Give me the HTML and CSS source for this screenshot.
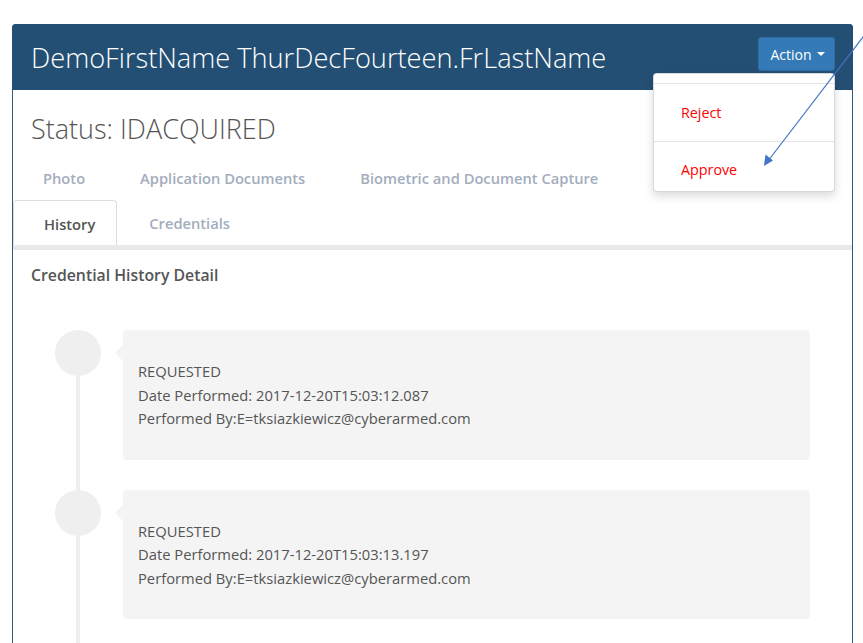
FILE: index.html
```html
<!DOCTYPE html>
<html>
<head>
<meta charset="utf-8">
<link rel="stylesheet" href="styles.css">
</head>
<body>
<div class="page">
  <div class="panel">
    <div class="panel-heading">
      <h1 class="title">DemoFirstName ThurDecFourteen.FrLastName</h1>
      <div class="action">
        <button class="btn-action">Action <span class="caret"></span></button>
        <ul class="dropdown">
          <li class="divider"></li>
          <li class="item item-first">Reject</li>
          <li class="divider"></li>
          <li class="item item-last">Approve</li>
        </ul>
      </div>
    </div>
    <div class="panel-body">
      <h2 class="status">Status: IDACQUIRED</h2>
    </div>
    <ul class="tabs">
      <li class="tab">Photo</li>
      <li class="tab">Application Documents</li>
      <li class="tab">Biometric and Document Capture</li>
      <li class="tab-break"></li>
      <li class="tab active">History</li>
      <li class="tab">Credentials</li>
    </ul>
    <div class="content">
      <h3 class="section-title">Credential History Detail</h3>
      <div class="timeline">
        <div class="tl-item">
          <div class="tl-dot"></div>
          <div class="tl-card">
            <div>REQUESTED</div>
            <div>Date Performed: 2017-12-20T15:03:12.087</div>
            <div>Performed By:E=tksiazkiewicz@cyberarmed.com</div>
          </div>
        </div>
        <div class="tl-item">
          <div class="tl-dot"></div>
          <div class="tl-card">
            <div>REQUESTED</div>
            <div>Date Performed: 2017-12-20T15:03:13.197</div>
            <div>Performed By:E=tksiazkiewicz@cyberarmed.com</div>
          </div>
        </div>
      </div>
    </div>
  </div>
</div>
<svg class="annotation" width="863" height="643" viewBox="0 0 863 643">
  <line x1="876" y1="20" x2="768" y2="161" stroke="#4472c4" stroke-width="1.2"/>
  <polygon points="764,166 765.5,154.5 773,160.5" fill="#4472c4"/>
</svg>
</body>
</html>
```
FILE: styles.css
```css
* { box-sizing: border-box; }
html, body { margin: 0; padding: 0; background: #fff; }
body {
  font-family: "Open Sans", "Liberation Sans", sans-serif;
  font-size: 14px;
  color: #555;
  overflow: hidden;
  width: 863px;
  height: 643px;
  position: relative;
}
.page {
  padding: 24px 10px 0 12px;
}
.panel {
  border: 1px solid #2c5a84;
  border-bottom: none;
  border-radius: 4px 4px 0 0;
  height: 640px;
}
.panel-heading {
  background: #244f74;
  height: 66px;
  margin: -1px -1px 0 -1px;
  border-radius: 4px 4px 0 0;
  padding: 0 18px 0 19px;
  display: flex;
  align-items: center;
  justify-content: space-between;
  position: relative;
}
.title {
  margin: 0;
  font-weight: 300;
  font-size: 27.2px;
  color: #fff;
  line-height: 36px;
  padding-top: 2px;
}
.action {
  position: relative;
  align-self: flex-start;
  margin-top: 13px;
}
.btn-action {
  background: #337ab7;
  border: 1px solid #2e6da4;
  border-radius: 3px;
  color: #fff;
  font-family: "Open Sans", "Liberation Sans", sans-serif;
  font-size: 14px;
  height: 34px;
  width: 77px;
  padding: 0 0 0 2px;
  display: flex;
  align-items: center;
  justify-content: center;
  gap: 5px;
}
.caret {
  display: inline-block;
  width: 0;
  height: 0;
  border-left: 4px solid transparent;
  border-right: 4px solid transparent;
  border-top: 4px solid #fff;
}
.dropdown {
  position: absolute;
  top: 36px;
  right: 0;
  width: 182px;
  height: 119px;
  margin: 0;
  padding: 0;
  list-style: none;
  background: #fff;
  border: 1px solid rgba(0,0,0,.15);
  border-radius: 4px;
  box-shadow: 0 4px 10px rgba(0,0,0,.15);
  z-index: 5;
}
.divider {
  height: 1px;
  background: #e5e5e5;
}
.dropdown .divider:first-child {
  margin-top: 9px;
}
.item {
  color: #ff0000;
  line-height: 20px;
  padding: 19px 0 0 27px;
  font-size: 14.3px;
}
.item-first { height: 57px; }
.item-last { height: 49px; padding-top: 18px; }
.panel-body {
  padding: 21px 18px 0 18px;
}
.status {
  margin: 0;
  font-weight: 300;
  font-size: 27px;
  line-height: 36px;
  color: #555;
}
.tabs {
  list-style: none;
  margin: 8px 0 0 0;
  padding: 0;
  display: flex;
  flex-wrap: wrap;
  border-bottom: 5px solid #e8e9eb;
}
.tab-break {
  flex-basis: 100%;
  height: 0;
}
.tab {
  font-weight: 600;
  font-size: 14.7px;
  color: #a3adbd;
  line-height: 20px;
  padding: 13px 23px 12px 30px;
  height: 45px;
  margin-right: 2px;
}
.tab.active {
  color: #555;
  border: 1px solid #ddd;
  border-bottom: none;
  border-radius: 4px 4px 0 0;
  padding: 13px 21px 11px 30px;
}
.content {
  padding: 13px 18px 0 18px;
}
.section-title {
  margin: 0;
  font-weight: 600;
  font-size: 15.8px;
  line-height: 24px;
  color: #555;
}
.timeline {
  position: relative;
  margin: 43px 24px 0 24px;
}
.timeline::before {
  content: "";
  position: absolute;
  left: 21px;
  top: 23px;
  width: 4px;
  height: 400px;
  background: #efefef;
}
.tl-item {
  display: flex;
  align-items: flex-start;
  margin-bottom: 30px;
  position: relative;
}
.tl-dot {
  width: 46px;
  height: 46px;
  border-radius: 50%;
  background: #efefef;
  flex: none;
  position: relative;
  z-index: 1;
}
.tl-card {
  flex: 1;
  margin-left: 22px;
  background: #f4f4f4;
  border-radius: 4px;
  padding: 30px 15px 29px 15px;
  line-height: 23.5px;
  font-size: 14.75px;
  color: #555;
  position: relative;
}
.tl-card::before {
  content: "";
  position: absolute;
  left: -8px;
  top: 15px;
  border-top: 8px solid transparent;
  border-bottom: 8px solid transparent;
  border-right: 8px solid #f4f4f4;
}
.annotation {
  position: absolute;
  left: 0;
  top: 0;
  pointer-events: none;
  z-index: 10;
}
```
